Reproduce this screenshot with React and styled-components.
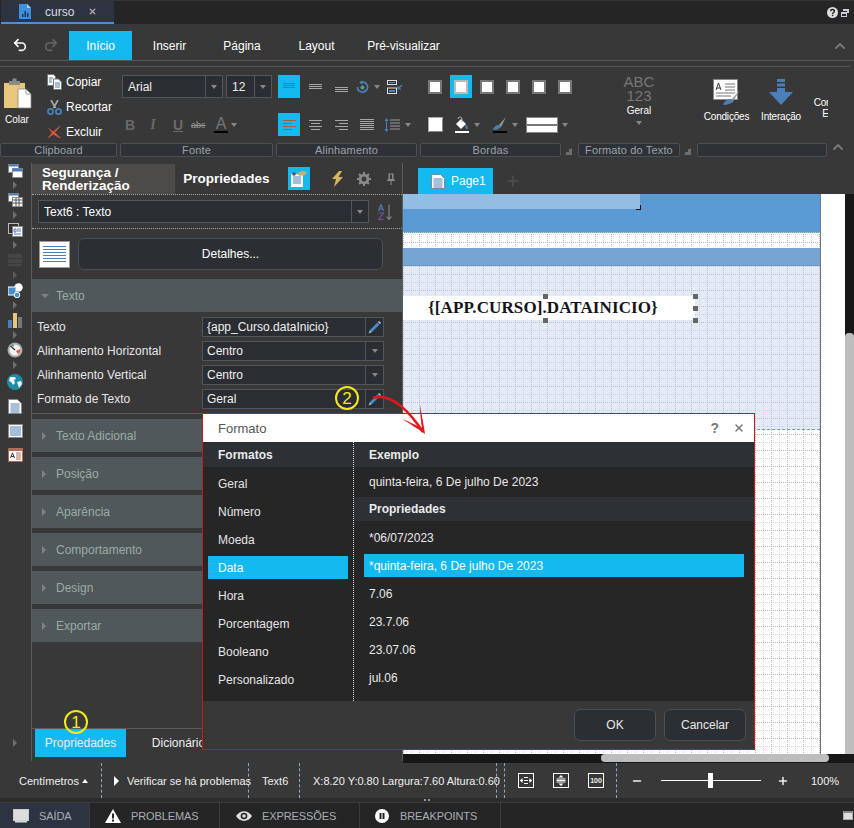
import React from 'react'
import styled, { createGlobalStyle } from 'styled-components'
import { Undo2, Redo2, Plus, Minus, X, ChevronUp } from 'lucide-react'

const ACCENT = '#14b9f0'
const BG = '#383838'
const FIELD = '#2a2e32'
const BLUE = '#4a7fb8'

const gridTile = encodeURIComponent(
  `<svg xmlns="http://www.w3.org/2000/svg" width="16" height="16"><g fill="none" stroke-dasharray="1 1"><path d="M8.5 0V16M0 8.5H16" stroke="#d4d6da"/><path d="M0.5 0V16M0 0.5H16" stroke="#b4b6ba"/></g></svg>`
)

const GlobalStyle = createGlobalStyle`
  html, body {
    margin: 0;
    padding: 0;
    background: ${BG};
  }
  * {
    box-sizing: border-box;
  }
`

const Screen = styled.div`
  position: relative;
  display: flex;
  flex-direction: column;
  width: 854px;
  height: 828px;
  overflow: hidden;
  background: ${BG};
  color: #fff;
  font-family: "Liberation Sans", Arial, sans-serif;
  font-size: 12px;
`

/* title bar */
const TitleBar = styled.div`
  display: flex;
  align-items: flex-start;
  justify-content: space-between;
  height: 24px;
  padding-left: 1px;
  background: #252525;
  border-top: 1px solid #333;
`

const FileTab = styled.div`
  display: flex;
  align-items: center;
  width: 113px;
  height: 23px;
  padding-left: 17px;
  background: #2d3340;
  border-bottom: 2px solid #4a90d9;
  color: #d8dce0;
`

const FileName = styled.span`
  margin-left: 13px;
  margin-right: 14px;
`

const WindowIcons = styled.div`
  display: flex;
  align-items: center;
  gap: 3px;
  height: 23px;
  padding-right: 5px;
`

/* menu */
const MenuRow = styled.div`
  display: flex;
  align-items: flex-end;
  height: 37px;
  padding-left: 12px;
  border-bottom: 1px solid #50565c;
`

const HistoryIcons = styled.div`
  display: flex;
  gap: 15px;
  align-self: center;
  width: 57px;
  margin-top: 6px;
`

const MenuItem = styled.div`
  display: flex;
  align-items: center;
  justify-content: center;
  width: ${p => p.$w}px;
  height: 29px;
  background: ${p => (p.$active ? ACCENT : 'transparent')};
  color: #fff;
  font-size: 12px;
`

const MenuCollapse = styled.div`
  display: flex;
  align-self: center;
  margin-left: auto;
  margin-right: 6px;
  margin-top: 8px;
  color: #777;
`

/* ribbon */
const Ribbon = styled.div`
  position: relative;
  height: 102px;
  padding-top: 5px;
`

const RibbonClip = styled.div`
  width: 828px;
  overflow: hidden;
  border-top: 1px solid #50565c;
`

const RibbonLine = styled.div`
  position: absolute;
  top: 5px;
  left: 828px;
  width: 22px;
  border-top: 1px solid #50565c;
`

const RibbonTools = styled.div`
  display: flex;
  width: 870px;
  height: 76px;
`

const ToolGroup = styled.div`
  display: ${p => (p.$rows ? 'flex' : 'block')};
  flex-direction: column;
  flex: none;
  gap: 15px;
  width: ${p => p.$w}px;
  padding-top: ${p => (p.$rows ? 8 : 0)}px;
  padding-left: ${p => p.$pl || 0}px;
`

const ToolRow = styled.div`
  display: flex;
  align-items: center;
  gap: ${p => (p.$gap === undefined ? 4 : p.$gap)}px;
  height: 23px;
`

const ToolSlot = styled.div`
  display: flex;
  align-items: center;
  justify-content: center;
  flex: none;
  gap: 5px;
  width: ${p => p.$w || 22}px;
  height: 23px;
  background: ${p => (p.$on ? ACCENT : 'transparent')};
`

const Caret = styled.span`
  display: inline-block;
  flex: none;
  width: 0;
  height: 0;
  border-left: 3.5px solid transparent;
  border-right: 3.5px solid transparent;
  border-top: 4px solid #888;
`

const PasteButton = styled.div`
  display: flex;
  flex-direction: column;
  align-items: center;
  width: 34px;
  padding-top: 11px;
  font-size: 10px;
`

const PasteLabel = styled.span`
  margin-top: 5px;
`

const ClipGroup = styled.div`
  display: flex;
  width: 122px;
`

const ClipList = styled.div`
  display: flex;
  flex-direction: column;
  gap: 7px;
  margin-left: 13px;
  padding-top: 6px;
`

const ClipAction = styled.div`
  display: flex;
  align-items: center;
  gap: 4px;
  height: 18px;
`

const ClipIcon = styled.span`
  display: flex;
  justify-content: center;
  width: 15px;
`

const FontSelect = styled.div`
  display: flex;
  align-items: center;
  flex: none;
  width: ${p => p.$w}px;
  height: 23px;
  padding-left: 5px;
  background: ${FIELD};
  border: 1px solid #50565c;
  color: #eee;
  font-size: 12px;
`

const SelectArrow = styled.span`
  display: flex;
  align-items: center;
  justify-content: center;
  flex: none;
  width: ${p => p.$w || 17}px;
  height: 100%;
  margin-left: auto;
  border-left: 1px solid #50565c;
`

const FontStyle = styled.span`
  flex: none;
  width: ${p => p.$w || 18}px;
  color: #6a6a6a;
  font-family: ${p => (p.$serif ? '"Liberation Serif", serif' : '"Liberation Sans", sans-serif')};
  font-size: 14px;
  font-weight: 700;
  font-style: ${p => (p.$italic ? 'italic' : 'normal')};
  text-decoration: ${p => (p.$under ? 'underline' : 'none')};
  text-align: center;
`

const StrikeText = styled.span`
  flex: none;
  width: 20px;
  color: #999;
  font-size: 9px;
  text-decoration: line-through;
`

const ColorLetter = styled.span`
  flex: none;
  width: 14px;
  color: #777;
  font-size: 16px;
  font-weight: 400;
  line-height: 15px;
  text-align: center;
  border-bottom: 2px solid #000;
`

const SquareIcon = styled.div`
  width: 14px;
  height: 14px;
  background: #fff;
  border: 2px solid #777;
  border-color: ${p => p.$edge || '#777'};
`

const ShadowSquare = styled.div`
  width: 13px;
  height: 13px;
  background: #fff;
  box-shadow: 1px 1px 0 #888, 0 0 0 1px #aaa;
`

const BorderPreview = styled.div`
  display: flex;
  flex-direction: column;
  flex: none;
  gap: 2px;
  width: 32px;
  height: 16px;
  padding: 0;
  background: #777;
  border: 1px solid #888;
`

const BorderStripe = styled.div`
  flex: 1;
  background: #fff;
`

const NumberFormat = styled.div`
  display: flex;
  flex-direction: column;
  align-items: center;
  padding-top: 8px;
  padding-right: 2px;
  font-size: 10px;
`

const AbcText = styled.div`
  color: #777;
  font-size: 15px;
  line-height: 14px;
  text-align: center;
`

const FormatName = styled.div`
  margin-top: 2px;
  margin-bottom: 5px;
  font-size: 10px;
  line-height: 11px;
`

const BigTool = styled.div`
  display: flex;
  flex-direction: column;
  align-items: center;
  flex: none;
  width: ${p => p.$w}px;
  padding-top: 12px;
  font-size: 10px;
  line-height: 11px;
  letter-spacing: -0.2px;
  text-align: center;
`

const BigLabel = styled.span`
  margin-top: 6px;
  white-space: nowrap;
`

const GroupLabels = styled.div`
  display: flex;
  width: 828px;
  height: 14px;
  overflow: hidden;
`

const GroupLabel = styled.div`
  display: flex;
  align-items: center;
  justify-content: center;
  flex: none;
  width: ${p => p.$w}px;
  margin-right: ${p => p.$mr || 3}px;
  background: #2e3236;
  border: 1px solid #4b5055;
  border-radius: 2px;
  color: #9ba2a8;
  font-size: 11px;
  letter-spacing: 0.15px;
`

const Expander = styled.span`
  flex: none;
  width: 7px;
  height: 7px;
  margin: 5px 5px 0 -1px;
  margin-right: ${p => p.$mr}px;
  border: 1px solid #6d6d6d;
  border-top-color: transparent;
  border-left-color: transparent;
  box-shadow: inset -2px -2px 0 #6d6d6d;
`

const GroupCollapse = styled.div`
  position: absolute;
  top: 78px;
  right: 8px;
  display: flex;
  color: #777;
`

/* main area */
const Main = styled.div`
  display: flex;
  height: 600px;
`

const SideRail = styled.div`
  display: flex;
  flex-direction: column;
  align-items: center;
  flex: none;
  width: 31px;
  padding-top: 0;
  padding-right: 1px;
`

const RailItem = styled.div`
  display: flex;
  align-items: center;
  justify-content: center;
  flex: none;
  height: ${p => p.$h}px;
`

const RailCaret = styled.span`
  flex: none;
  width: 0;
  height: 0;
  margin: 3px 0 3px;
  border-top: 4px solid transparent;
  border-bottom: 4px solid transparent;
  border-left: 4px solid ${p => p.$c || '#6f6f6f'};
`

const RailFoot = styled.div`
  display: flex;
  margin-top: auto;
  margin-bottom: 13px;
`

const Panel = styled.div`
  display: flex;
  flex-direction: column;
  flex: none;
  width: 372px;
  border-left: 1px solid #5c5c5c;
  border-right: 1px solid #5c5c5c;
  margin-bottom: 2px;
`

const PanelHeader = styled.div`
  display: flex;
  align-items: center;
  height: 32px;
  border-bottom: 1px dotted #aaa;
`

const SecurityTab = styled.div`
  display: flex;
  align-items: center;
  width: 146px;
  height: 30px;
  padding-left: 10px;
  background: #4d4a4a;
  font-size: 13.5px;
  font-weight: 700;
  line-height: 13px;
`

const HeaderTitle = styled.div`
  width: 107px;
  margin-left: 8px;
  font-size: 13.5px;
  font-weight: 700;
`

const HeaderIcon = styled.div`
  display: flex;
  align-items: center;
  justify-content: center;
  flex: none;
  width: 22px;
  height: 23px;
  margin-right: ${p => p.$mr}px;
  background: ${p => (p.$on ? ACCENT : 'transparent')};
`

const ObjectRow = styled.div`
  display: flex;
  align-items: center;
  height: 34px;
  padding-left: 6px;
  padding-top: 0;
  border-bottom: 1px dotted #aaa;
`

const ObjectSelect = styled.div`
  display: flex;
  align-items: center;
  width: 331px;
  height: 23px;
  padding-left: 5px;
  background: ${FIELD};
  border: 1px solid #50565c;
`

const SortIcon = styled.div`
  display: flex;
  margin-left: 9px;
`

const DetailRow = styled.div`
  display: flex;
  align-items: center;
  height: 50px;
  padding-left: 7px;
`

const DetailThumb = styled.div`
  display: flex;
  flex-direction: column;
  justify-content: center;
  gap: 2px;
  width: 31px;
  height: 27px;
  padding: 0 3px;
  background: #fff;
  border: 1px solid #999;
`

const ThumbLine = styled.div`
  height: 1px;
  background: ${BLUE};
`

const DetailButton = styled.div`
  display: flex;
  align-items: center;
  justify-content: center;
  width: 305px;
  height: 32px;
  margin-left: 8px;
  background: #2b2f33;
  border: 1px solid #4b5055;
  border-radius: 6px;
`

const SectionBar = styled.div`
  display: flex;
  align-items: center;
  flex: none;
  height: 33px;
  margin-bottom: 5px;
  padding-left: 9px;
  background: #50585c;
  color: #9aaca2;
`

const SectionArrow = styled.span`
  flex: none;
  width: 0;
  height: 0;
  margin-right: 7px;
  ${p =>
    p.$open
      ? `margin-left: 0; margin-right: 7px; border-left: 4px solid transparent; border-right: 4px solid transparent; border-top: 4px solid #7b8486;`
      : `margin-left: 1px; margin-right: 10px; border-top: 4px solid transparent; border-bottom: 4px solid transparent; border-left: 4px solid #7b8486;`}
`

const PropList = styled.div`
  display: flex;
  flex-direction: column;
  gap: 4px;
  height: 97px;
  padding-bottom: 0;
  margin-bottom: 5px;
  border-bottom: 1px solid #5c5c5c;
`

const PropRow = styled.div`
  display: flex;
  align-items: center;
  height: 20px;
  padding-left: 5px;
  color: #e6e6e6;
`

const PropName = styled.div`
  width: 165px;
`

const PropInput = styled.div`
  display: flex;
  align-items: center;
  width: 164px;
  height: 20px;
  padding-left: ${p => p.$pl || 4}px;
  background: ${FIELD};
  border: 1px solid #50565c;
  color: #f0f0f0;
`

const PropButton = styled.div`
  display: flex;
  align-items: center;
  justify-content: center;
  width: 18px;
  height: 20px;
  background: ${FIELD};
  border: 1px solid #50565c;
  border-left: none;
`

const PanelTabs = styled.div`
  display: flex;
  align-items: flex-start;
  height: 33px;
  margin-top: auto;
  padding-left: 3px;
  border-top: 1px solid #5c5c5c;
`

const PanelTab = styled.div`
  display: flex;
  align-items: center;
  justify-content: center;
  width: ${p => p.$w}px;
  height: 28px;
  background: ${p => (p.$on ? ACCENT : 'transparent')};
  color: #eee;
`

/* canvas */
const CanvasArea = styled.div`
  display: flex;
  flex-direction: column;
  flex: 1;
  min-width: 0;
`

const PageTabs = styled.div`
  display: flex;
  align-items: flex-end;
  flex: none;
  height: 31px;
  padding-left: 15px;
`

const PageTab = styled.div`
  display: flex;
  align-items: center;
  gap: 6px;
  width: 75px;
  height: 26px;
  padding-left: 13px;
  background: ${ACCENT};
`

const AddPage = styled.div`
  display: flex;
  align-self: center;
  margin-left: 12px;
  margin-top: 5px;
  color: #4a4a4a;
`

const CanvasBody = styled.div`
  display: flex;
  flex: none;
  height: 560px;
`

const Sheet = styled.div`
  display: flex;
  flex-direction: column;
  flex: none;
  width: 418px;
  background-color: #fff;
  background-image: url("data:image/svg+xml,${gridTile}");
  border-right: 1px solid #777;
`

const HeaderBand = styled.div`
  flex: none;
  height: 39px;
  background: #5b9bd5;
  border-bottom: 1px dotted #a9d6b8;
`

const HeaderField = styled.div`
  position: relative;
  width: 237px;
  height: 15px;
  background: #93bde3;
`

const CropMark = styled.span`
  position: absolute;
  right: -1px;
  bottom: -1px;
  width: 5px;
  height: 5px;
  border-right: 1px solid #111;
  border-bottom: 1px solid #111;
`

const SheetGap = styled.div`
  flex: none;
  height: 15px;
`

const TitleBand = styled.div`
  flex: none;
  height: 18px;
  background: #77a5d3;
  border-bottom: 1px solid #6a95c4;
`

const DetailBand = styled.div`
  flex: none;
  height: 164px;
  padding-top: 30px;
  background-color: rgba(180, 198, 231, 0.36);
  border-bottom: 1px dashed #6a9ad0;
`

const SelectedText = styled.div`
  position: relative;
  display: flex;
  align-items: center;
  width: 292px;
  height: 24px;
  padding-left: 25px;
  background: #fff;
  color: #14141c;
  font-family: "Liberation Serif", serif;
  font-size: 17px;
  font-weight: 700;
  letter-spacing: 0.1px;
  white-space: nowrap;
`

const Handle = styled.span`
  position: absolute;
  left: ${p => p.$x}px;
  top: ${p => p.$y}px;
  width: 5px;
  height: 5px;
  background: #666;
`

const SideMargin = styled.div`
  flex: none;
  width: 24px;
  background: #fff;
`

const VScroll = styled.div`
  display: flex;
  flex-direction: column;
  flex: 1;
  padding-top: 139px;
  background: #171717;
`

const VThumb = styled.div`
  flex: 1;
  background: #bdbdbd;
  border-radius: 4px 4px 0 0;
`

const HScroll = styled.div`
  flex: none;
  height: 9px;
  padding-left: 198px;
  background: #171717;
`

const HThumb = styled.div`
  width: 228px;
  height: 8px;
  background: #bdbdbd;
  border-radius: 4px;
`

/* status bar */
const StatusBar = styled.div`
  display: flex;
  align-items: center;
  height: 35px;
  font-size: 11px;
  color: #f0f0f0;
`

const StatusCell = styled.div`
  display: flex;
  align-items: center;
  flex: none;
  width: ${p => p.$w}px;
  height: 35px;
  padding-left: ${p => p.$pl || 0}px;
  gap: ${p => p.$gap || 0}px;
  border-right: ${p => (p.$plain ? 'none' : '1px dashed #8fa9c4')};
  white-space: nowrap;
`

const TinyUp = styled.span`
  width: 0;
  height: 0;
  margin-left: 3px;
  border-left: 3.5px solid transparent;
  border-right: 3.5px solid transparent;
  border-bottom: 4px solid #fff;
`

const PlayMark = styled.span`
  width: 0;
  height: 0;
  margin-right: 8px;
  border-top: 5px solid transparent;
  border-bottom: 5px solid transparent;
  border-left: 5px solid #fff;
`

const ZoomSlider = styled.div`
  position: relative;
  flex: none;
  width: 100px;
  height: 1px;
  margin: 0 16px 0 18px;
  background: #fff;
`

const ZoomThumb = styled.span`
  position: absolute;
  left: 47px;
  top: -7px;
  width: 5px;
  height: 15px;
  background: #fff;
`

const ZoomValue = styled.span`
  margin-left: 22px;
`

const GripBand = styled.div`
  display: flex;
  justify-content: center;
  gap: 2px;
  height: 4px;
  background: #2c2c2c;
  padding-top: 1px;
`

const GripDot = styled.span`
  width: 2px;
  height: 2px;
  background: #999;
`

const OutputBar = styled.div`
  display: flex;
  height: 26px;
  background: #252525;
  border-top: 1px solid #3a3a3a;
`

const OutputTab = styled.div`
  display: flex;
  align-items: center;
  flex: none;
  width: ${p => p.$w}px;
  padding-left: ${p => p.$pl}px;
  gap: ${p => p.$gap}px;
  background: ${p => (p.$on ? '#2d3340' : 'transparent')};
  border-right: 1px solid #3a3a3a;
  color: #a9adb2;
  font-size: 11px;
  letter-spacing: -0.1px;
`

const DockIcon = styled.div`
  display: flex;
  align-items: center;
  margin-left: auto;
  padding-right: 1px;
`

const DockBox = styled.div`
  width: 10px;
  height: 9px;
  margin-right: 0;
  background: #ddd;
  border: 1px solid #aaa;
  border-top: 2px solid #888;
`

/* dialog */
const Dialog = styled.div`
  position: absolute;
  left: 202px;
  top: 413px;
  display: flex;
  flex-direction: column;
  width: 553px;
  height: 337px;
  background: ${BG};
  border: 1px solid #c8181e;
`

const DialogHead = styled.div`
  display: flex;
  align-items: center;
  flex: none;
  height: 28px;
  padding-left: 15px;
  padding-right: 9px;
  background: #fff;
  color: #555;
  font-size: 13px;
`

const HeadActions = styled.div`
  display: flex;
  align-items: center;
  gap: 14px;
  margin-left: auto;
  color: #777;
`

const HelpMark = styled.span`
  font-size: 14px;
  font-weight: 700;
`

const DialogBody = styled.div`
  display: flex;
  flex: none;
  height: 259px;
  background: #262626;
`

const FormatColumn = styled.div`
  display: flex;
  flex-direction: column;
  flex: none;
  width: 151px;
  border-right: 1px dotted #ddd;
`

const ValuesColumn = styled.div`
  display: flex;
  flex-direction: column;
  flex: 1;
`

const ColumnHead = styled.div`
  display: flex;
  align-items: center;
  flex: none;
  height: ${p => p.$h}px;
  padding-left: ${p => p.$pl}px;
  background: #2d3135;
  color: #eaeaea;
  font-weight: 700;
`

const FormatList = styled.div`
  display: flex;
  flex-direction: column;
  gap: 5px;
  padding: 5px 5px 0;
`

const FormatRow = styled.div`
  display: flex;
  align-items: center;
  height: 23px;
  padding-left: 10px;
  background: ${p => (p.$on ? ACCENT : 'transparent')};
  color: ${p => (p.$on ? '#fff' : '#e4e4e4')};
`

const SampleRow = styled.div`
  display: flex;
  align-items: center;
  flex: none;
  height: 30px;
  padding-left: 15px;
  color: #e8e8e8;
`

const ValueList = styled.div`
  display: flex;
  flex-direction: column;
  gap: 5px;
  padding: 5px 10px 0;
`

const ValueRow = styled.div`
  display: flex;
  align-items: center;
  height: 23px;
  padding-left: 5px;
  background: ${p => (p.$on ? ACCENT : 'transparent')};
  color: ${p => (p.$on ? '#fff' : '#e8e8e8')};
`

const DialogFoot = styled.div`
  display: flex;
  justify-content: flex-end;
  gap: 8px;
  padding: 8px 8px 0 0;
`

const DialogButton = styled.div`
  display: flex;
  align-items: center;
  justify-content: center;
  width: 82px;
  height: 32px;
  background: #2b2f33;
  border: 1px solid #4b5055;
  border-radius: 6px;
  color: #e8e8e8;
`

/* annotations over the screenshot */
const Marker = styled.div`
  position: absolute;
  left: ${p => p.$x}px;
  top: ${p => p.$y}px;
  display: flex;
  align-items: center;
  justify-content: center;
  width: 24px;
  height: 24px;
  border: 2px solid #f5ea14;
  border-radius: 50%;
  color: #f5ea14;
  font-size: 17px;
  line-height: 1;
`

const ArrowLayer = styled.svg`
  position: absolute;
  left: 365px;
  top: 390px;
`

/* drawings */
const ReportIcon = () => (
  <svg width="14" height="17" viewBox="0 0 14 17">
    <path d="M1 1h8l4 4v11H1z" fill="#3f8fdc" />
    <path d="M9 1v4h4z" fill="#a8cff0" />
    <path d="M4 14v-3h1.5v3zM6.5 14V8H8v6zM9 14v-4h1.5v4z" fill="#16385c" />
  </svg>
)

const HelpIcon = () => (
  <svg width="11" height="11" viewBox="0 0 11 11">
    <circle cx="5.5" cy="5.5" r="5.5" fill="#ddd" />
    <path d="M3.7 4.2c0-2.3 3.7-2.3 3.7 0 0 1.4-1.8 1.3-1.8 2.7" fill="none" stroke="#222" strokeWidth="1.4" />
    <rect x="4.9" y="7.7" width="1.4" height="1.4" fill="#222" />
  </svg>
)

const RestoreIcon = () => (
  <svg width="8" height="8" viewBox="0 0 8 8">
    <path d="M2 0h6v4H6V2H2z" fill="#ccd" />
    <path d="M0 3h6v5H0z" fill="#ccd" />
    <path d="M1 5h4v2H1z" fill="#252525" />
  </svg>
)

const ClipboardIcon = () => (
  <svg width="29" height="31" viewBox="0 0 29 31">
    <path d="M1 5h21v25H1z" fill="#e8c67e" />
    <path d="M6 3h3.5V0.5h4V3H17v4H6z" fill="#8a8a8a" />
    <path d="M15 11h8l5 5v14H15z" fill="#fff" stroke="#888" strokeWidth="0.8" />
    <path d="M23 11v5h5" fill="none" stroke="#888" strokeWidth="0.8" />
  </svg>
)

const CopyIcon = () => (
  <svg width="15" height="16" viewBox="0 0 15 16">
    <path d="M0.5 0.5h6l2 2v9h-8z" fill="#fff" stroke="#777" />
    <path d="M6.5 5h5l3 3v7.5h-8z" fill="#fff" stroke="#777" />
    <path d="M2 4h4M2 6h3M2 8h3M8 9h5M8 11h5M8 13h5" stroke="#4a7fb8" />
  </svg>
)

const ScissorsIcon = () => (
  <svg width="15" height="15" viewBox="0 0 15 15">
    <path d="M4 0l4.5 8M11 0L6.5 8" stroke="#aaa" strokeWidth="1.6" fill="none" />
    <circle cx="3.5" cy="11.5" r="2.6" fill="none" stroke="#4a7fb8" strokeWidth="1.8" />
    <circle cx="11.5" cy="11.5" r="2.6" fill="none" stroke="#4a7fb8" strokeWidth="1.8" />
  </svg>
)

const DeleteIcon = () => (
  <svg width="15" height="14" viewBox="0 0 15 14">
    <path d="M14.5 0.5C10 2.5 8 5 6.5 6.5 4 5.5 2 3 0.5 2 2 4 3.5 6 5 8 3 10 1.5 12 0.5 13.5 3 12 5 10.5 6.5 9.5 9 11 12 13 14.5 13.5 12 11.5 10 9.5 8 7.5 10 5 12 3 14.5 0.5z" fill="#d8583a" />
  </svg>
)

const Lines = ({ width = 14, rows, color = '#999', offset }) => (
  <svg width={width} height="14" viewBox={`0 0 ${width} 14`}>
    {rows.map((r, i) => (
      <rect key={i} x={r[0]} y={r[2] + (offset || 0)} width={r[1]} height="1" fill={r[3] || color} />
    ))}
  </svg>
)

const RotateIcon = () => (
  <svg width="14" height="14" viewBox="0 0 14 14">
    <path d="M4.5 2.2A5.5 5.5 0 1 1 1.5 7" fill="none" stroke="#4a7fb8" strokeWidth="1.8" />
    <path d="M7 0L3.5 2.3 7 4.5z" fill="#4a7fb8" />
    <circle cx="7" cy="7.5" r="2.2" fill="#5a9a80" />
  </svg>
)

const OrientIcon = () => (
  <svg width="16" height="14" viewBox="0 0 16 14">
    <rect x="0.5" y="0.5" width="9" height="4" fill="#333" stroke="#ddd" />
    <rect x="0.5" y="8" width="9" height="5.5" fill="#333" stroke="#ddd" />
    <rect x="2" y="2" width="6" height="1" fill="#4a7fb8" />
    <rect x="2" y="10" width="6" height="2" fill="#4a7fb8" />
    <path d="M15 5L11 9M11 6v3h3" stroke="#4a7fb8" strokeWidth="1.2" fill="none" />
  </svg>
)

const SpacingIcon = () => (
  <svg width="16" height="14" viewBox="0 0 16 14">
    <path d="M2.5 2v10" stroke="#4a7fb8" />
    <path d="M0.5 3l2-3 2 3zM0.5 11l2 3 2-3z" fill="#4a7fb8" />
    <path d="M6 2h10M6 5h10M6 8h10M6 11h10" stroke="#999" />
  </svg>
)

const BucketIcon = () => (
  <svg width="14" height="17" viewBox="0 0 14 17">
    <path d="M1 8l5-5 5 5-5 5z" fill="#fff" />
    <path d="M3 3a2 2 0 0 1 4 0v3" stroke="#aaa" fill="none" />
    <path d="M10 9c2 0 3 1 3 4h-2z" fill="#4a7fb8" />
    <rect x="0" y="15" width="14" height="2" fill="#fff" />
  </svg>
)

const PenIcon = () => (
  <svg width="14" height="17" viewBox="0 0 14 17">
    <path d="M13 1L6 9l2 2z" fill="#999" />
    <path d="M0 14c1-4 4-5 6-5l2 2c-2 2-4 3-8 3z" fill="#4a7fb8" />
    <rect x="0" y="15" width="14" height="2" fill="#000" />
  </svg>
)

const ConditionsIcon = () => (
  <svg width="28" height="26" viewBox="0 0 28 26">
    <rect x="0.5" y="0.5" width="24" height="20" fill="#fff" stroke="#888" />
    <path d="M12 5h10M12 8h10M12 11h10M3 14h19M3 17h15" stroke="#777" />
    <path d="M3 11l2.5-7 2.5 7M4 9h3" fill="none" stroke="#333" />
    <path d="M27 11L17 22l2 2z" fill="#999" />
    <path d="M10 26c1-4 5-6 8-6l2 2c-2 3-6 4-10 4z" fill="#4a7fb8" />
  </svg>
)

const InteractionIcon = () => (
  <svg width="24" height="26" viewBox="0 0 24 26">
    <path d="M8 0h8v3H8zM8 4.500h8v3H8zM8 9h8v4h8L12 26 0 13h8z" fill="#4a7fb8" />
  </svg>
)

const CutoffIcon = () => (
  <svg width="10" height="12" viewBox="0 0 10 12">
    <path d="M0 2h10v10z" fill="#e8c67e" />
  </svg>
)

const RAIL_ICON = { width: 15, height: 14, viewBox: '0 0 15 14' }

const WindowsIcon = () => (
  <svg {...RAIL_ICON}>
    <rect x="0.500" y="0.500" width="10" height="8" fill="#fff" stroke="#888" />
    <rect x="0.500" y="0.500" width="10" height="2" fill="#4a7fb8" />
    <rect x="4.500" y="4.500" width="10" height="9" fill="#fff" stroke="#888" />
    <rect x="4.500" y="4.500" width="10" height="3" fill="#4a7fb8" />
  </svg>
)

const TableWindowIcon = () => (
  <svg {...RAIL_ICON}>
    <rect x="0.500" y="0.500" width="10" height="8" fill="#fff" stroke="#888" />
    <rect x="0.500" y="0.500" width="10" height="2" fill="#4a7fb8" />
    <rect x="4.500" y="4.500" width="10" height="9" fill="#fff" stroke="#888" />
    <path d="M5 7h9M5 10h9M8 5v8M11 5v8" stroke="#555" />
  </svg>
)

const SubreportIcon = () => (
  <svg {...RAIL_ICON}>
    <rect x="0.500" y="0.500" width="10" height="10" fill="#333" stroke="#bbb" />
    <rect x="4.500" y="3.500" width="10" height="10" fill="#fff" stroke="#888" />
    <path d="M6 6h2v3H6zM9 6h4M9 8h4M6 11h7" stroke="#4a7fb8" fill="none" />
  </svg>
)

const BarcodeIcon = () => (
  <svg {...RAIL_ICON}>
    <path d="M1 1v12M3 1v12M5 1v12M7 1v12M9 1v12M11 1v12M13 1v12" stroke="#555" strokeDasharray="4 1" />
  </svg>
)

const ShapesIcon = () => (
  <svg width="15" height="15" viewBox="0 0 15 15">
    <circle cx="10.500" cy="4.500" r="4.200" fill="#fff" />
    <rect x="0" y="4" width="8" height="8" fill="#4a8fd0" stroke="#fff" />
    <circle cx="9" cy="12" r="2.800" fill="#4a8fd0" stroke="#fff" />
  </svg>
)

const ChartIcon = () => (
  <svg width="15" height="15" viewBox="0 0 15 15">
    <rect x="0" y="7" width="4" height="8" fill="#4a7fb8" />
    <rect x="5" y="0" width="4" height="15" fill="#e8c67e" />
    <rect x="10" y="4" width="4" height="11" fill="#777" />
  </svg>
)

const GaugeIcon = () => (
  <svg width="16" height="16" viewBox="0 0 16 16">
    <circle cx="8" cy="8" r="7.500" fill="#aaa" />
    <circle cx="8" cy="8" r="5.500" fill="#f4f4f4" />
    <path d="M3.500 4L8 8" stroke="#333" strokeWidth="1.400" />
    <path d="M13 7a5 5 0 0 1-2 5L9 9z" fill="#d8583a" />
    <path d="M5 3l2 1" stroke="#5a9a80" strokeWidth="1.400" />
  </svg>
)

const GlobeIcon = () => (
  <svg width="16" height="16" viewBox="0 0 16 16">
    <circle cx="8" cy="8" r="8" fill="#1f8ca8" />
    <path d="M3 3h5l1 2-2 1 1 3-2 2-2-3-2-1zM10 8l4-1 1 3-3 4-1-3z" fill="#f2f6f8" />
  </svg>
)

const PageIcon = ({ size = 14 }) => (
  <svg width={size} height={size + 1} viewBox="0 0 14 15">
    <path d="M0.500 0.500h9l4 4v10h-13z" fill="#fff" stroke="#888" />
    <path d="M2.500 5h9M2.500 7h9M2.500 9h9M2.500 11h9M2.500 13h9" stroke="#4a7fb8" />
  </svg>
)

const RowsIcon = () => (
  <svg {...RAIL_ICON}>
    <rect x="0.500" y="0.500" width="14" height="13" fill="#fff" stroke="#888" />
    <path d="M2 3h11M2 5h11M2 7h11M2 9h11M2 11h11" stroke="#4a7fb8" />
  </svg>
)

const LetterCardIcon = () => (
  <svg {...RAIL_ICON}>
    <rect x="0" y="0" width="15" height="14" fill="#b56a58" />
    <rect x="1" y="3" width="13" height="10" fill="#fff" />
    <path d="M2.500 10l2-5 2 5M3.200 8.500h2.600" stroke="#333" fill="none" />
    <path d="M8 5h5M8 7h5M8 9h5M8 11h5" stroke="#b56a58" />
  </svg>
)

const PropsPageIcon = () => (
  <svg width="18" height="17" viewBox="0 0 18 17">
    <path d="M1 4h12v13H1z" fill="#fff" />
    <path d="M3 7h8M3 9h8M3 11h8M3 13h8" stroke="#4a7fb8" />
    <path d="M6 4l6-3 5 1-2 3-5 1z" fill="#c7b073" />
    <circle cx="4" cy="4" r="1.800" fill="#555" />
  </svg>
)

const BoltIcon = () => (
  <svg width="11" height="16" viewBox="0 0 11 16">
    <path d="M7 0L0 8h4L2 16l9-10H6.500L10 0z" fill="#d8b45e" />
  </svg>
)

const GearIcon = () => (
  <svg width="14" height="14" viewBox="0 0 14 14">
    <circle cx="7" cy="7" r="4" fill="none" stroke="#8a8a8a" strokeWidth="2.600" />
    <path d="M7 0v14M0 7h14M2 2l10 10M12 2L2 12" stroke="#8a8a8a" strokeWidth="2" />
    <circle cx="7" cy="7" r="2.500" fill={BG} />
  </svg>
)

const PinIcon = () => (
  <svg width="8" height="12" viewBox="0 0 8 12">
    <path d="M1.500 0.500h5v6H8v1.500H0V6.500h1.500zM3.500 8h1v4h-1z" fill="#8a8a8a" />
    <rect x="3" y="1.500" width="2" height="4.500" fill={BG} />
  </svg>
)

const SortAzIcon = () => (
  <svg width="14" height="16" viewBox="0 0 14 16">
    <path d="M0.500 7L3 0.500 5.500 7M1.200 5h3.600" fill="none" stroke="#4a7fb8" strokeWidth="1.100" />
    <path d="M0.500 9h5L0.500 15.500h5" fill="none" stroke="#7b4fa8" strokeWidth="1.100" />
    <path d="M11 0.500V15M8.500 12.500L11 15.500l2.500-3" fill="none" stroke="#888" strokeWidth="1.100" />
  </svg>
)

const PencilIcon = () => (
  <svg width="13" height="13" viewBox="0 0 13 13">
    <path d="M9.500 1.500l2 2L4 11l-2-2z" fill="#4a8ad0" />
    <path d="M10 1l1-1 2 2-1 1z" fill="#b8d4ee" />
    <path d="M2 9l2 2-3.500 1.500z" fill="#9fb8d0" />
  </svg>
)

const FitWidthIcon = () => (
  <svg width="16" height="15" viewBox="0 0 16 15">
    <rect x="0.500" y="0.500" width="15" height="14" fill="none" stroke="#fff" />
    <path d="M6 4.500h4M6 7.500h4M6 10.500h4M5 7.500H2M11 7.500h3" stroke="#fff" />
    <path d="M4.500 5v5L2 7.500zM11.500 5v5L14 7.500z" fill="#fff" />
  </svg>
)

const FitHeightIcon = () => (
  <svg width="16" height="15" viewBox="0 0 16 15">
    <rect x="0.500" y="0.500" width="15" height="14" fill="none" stroke="#fff" />
    <path d="M3.500 6h9M3.500 7.500h9M3.500 9h9" stroke="#fff" />
    <path d="M5.500 4.500L8 2l2.500 2.500zM5.500 10.500L8 13l2.500-2.500z" fill="#fff" />
  </svg>
)

const MonitorIcon = () => (
  <svg width="16" height="14" viewBox="0 0 16 14">
    <rect x="0.500" y="0.500" width="15" height="11" fill="#ddd" stroke="#ccc" />
    <rect x="2" y="12" width="12" height="1.500" fill="#ddd" />
  </svg>
)

const WarnIcon = () => (
  <svg width="16" height="14" viewBox="0 0 16 14">
    <path d="M8 0l8 14H0z" fill="#fff" />
    <path d="M7 4.500h2v5H7zM7 10.500h2v2H7z" fill="#252525" />
  </svg>
)

const EyeIcon = () => (
  <svg width="16" height="10" viewBox="0 0 16 10">
    <path d="M0 5c4-6.500 12-6.500 16 0-4 6.500-12 6.500-16 0z" fill="#ddd" />
    <circle cx="8" cy="5" r="3.300" fill="#252525" />
    <circle cx="8" cy="5" r="1.800" fill="#ddd" />
  </svg>
)

const PauseIcon = () => (
  <svg width="14" height="14" viewBox="0 0 14 14">
    <circle cx="7" cy="7" r="7" fill="#fff" />
    <path d="M4.500 4h2v6h-2zM7.500 4h2v6h-2z" fill="#252525" />
  </svg>
)

const SelectCaret = () => <SelectArrow><Caret /></SelectArrow>

const SECTIONS = ['Texto Adicional', 'Posição', 'Aparência', 'Comportamento', 'Design', 'Exportar']
const FORMATS = ['Geral', 'Número', 'Moeda', 'Data', 'Hora', 'Porcentagem', 'Booleano', 'Personalizado']
const VALUES = ['*06/07/2023', '*quinta-feira, 6 De julho De 2023', '7.06', '23.7.06', '23.07.06', 'jul.06']

const L = '#a8a8a8'
const ALIGN_TOP = [[1, 12, 3], [1, 12, 5], [1, 12, 7]]
const ALIGN_MID = [[1, 13, 4], [1, 13, 6], [1, 13, 8]]
const ALIGN_LOW = [[1, 13, 7], [1, 13, 9], [1, 13, 11]]
const TEXT_LEFT = [[1, 14, 2], [1, 9, 5], [1, 14, 8], [1, 9, 11]]
const TEXT_CENTER = [[1, 13, 2], [3, 9, 5], [1, 13, 8], [3, 9, 11]]
const TEXT_RIGHT = [[1, 13, 2], [5, 9, 5], [1, 13, 8], [5, 9, 11]]
const TEXT_FULL = [[0, 14, 1], [0, 14, 3], [0, 14, 5], [0, 14, 7], [0, 14, 9], [0, 14, 11]]

const RibbonArea = () => (
  <Ribbon>
    <RibbonLine />
    <RibbonClip>
      <RibbonTools>
        <ClipGroup>
          <PasteButton>
            <ClipboardIcon />
            <PasteLabel>Colar</PasteLabel>
          </PasteButton>
          <ClipList>
            <ClipAction><ClipIcon><CopyIcon /></ClipIcon>Copiar</ClipAction>
            <ClipAction><ClipIcon><ScissorsIcon /></ClipIcon>Recortar</ClipAction>
            <ClipAction><ClipIcon><DeleteIcon /></ClipIcon>Excluir</ClipAction>
          </ClipList>
        </ClipGroup>
        <ToolGroup $rows $w={156}>
          <ToolRow $gap={3}>
            <FontSelect $w={101}>Arial<SelectCaret /></FontSelect>
            <FontSelect $w={46}>12<SelectCaret /></FontSelect>
          </ToolRow>
          <ToolRow $gap={3}>
            <FontStyle $w={16}>B</FontStyle>
            <FontStyle $w={24} $serif $italic>I</FontStyle>
            <FontStyle $w={20} $under>U</FontStyle>
            <StrikeText>abc</StrikeText>
            <ColorLetter>A</ColorLetter>
            <Caret />
          </ToolRow>
        </ToolGroup>
        <ToolGroup $rows $w={144}>
          <ToolRow>
            <ToolSlot $on><Lines rows={ALIGN_TOP} color="#b4553f" /></ToolSlot>
            <ToolSlot><Lines rows={ALIGN_MID} color={L} /></ToolSlot>
            <ToolSlot><Lines rows={ALIGN_LOW} color={L} /></ToolSlot>
            <ToolSlot $w={24}><RotateIcon /><Caret /></ToolSlot>
            <ToolSlot $w={22}><OrientIcon /></ToolSlot>
          </ToolRow>
          <ToolRow>
            <ToolSlot $on><Lines rows={TEXT_LEFT} color="#b4553f" /></ToolSlot>
            <ToolSlot><Lines rows={TEXT_CENTER} color={L} /></ToolSlot>
            <ToolSlot><Lines rows={TEXT_RIGHT} color={L} /></ToolSlot>
            <ToolSlot><Lines rows={TEXT_FULL} color={L} /></ToolSlot>
            <ToolSlot $w={30}><SpacingIcon /><Caret /></ToolSlot>
          </ToolRow>
        </ToolGroup>
        <ToolGroup $rows $w={158} $pl={2}>
          <ToolRow>
            <ToolSlot><SquareIcon /></ToolSlot>
            <ToolSlot $on><SquareIcon $edge="#bbb" /></ToolSlot>
            <ToolSlot><SquareIcon /></ToolSlot>
            <ToolSlot><SquareIcon /></ToolSlot>
            <ToolSlot><SquareIcon /></ToolSlot>
            <ToolSlot><SquareIcon /></ToolSlot>
          </ToolRow>
          <ToolRow>
            <ToolSlot><ShadowSquare /></ToolSlot>
            <ToolSlot $w={34}><BucketIcon /><Caret /></ToolSlot>
            <ToolSlot $w={34}><PenIcon /><Caret /></ToolSlot>
            <BorderPreview><BorderStripe /><BorderStripe /></BorderPreview>
            <Caret />
          </ToolRow>
        </ToolGroup>
        <ToolGroup $w={120}>
          <NumberFormat>
            <AbcText>ABC<br />123</AbcText>
            <FormatName>Geral</FormatName>
            <Caret />
          </NumberFormat>
        </ToolGroup>
        <BigTool $w={53}><ConditionsIcon /><BigLabel>Condições</BigLabel></BigTool>
        <BigTool $w={56}><InteractionIcon /><BigLabel>Interação</BigLabel></BigTool>
        <BigTool $w={50}><CutoffIcon /><BigLabel>Condição<br />Estilo</BigLabel></BigTool>
      </RibbonTools>
    </RibbonClip>
    <GroupLabels>
      <GroupLabel $w={117}>Clipboard</GroupLabel>
      <GroupLabel $w={153}>Fonte</GroupLabel>
      <GroupLabel $w={141}>Alinhamento</GroupLabel>
      <GroupLabel $w={141} $mr={5}>Bordas</GroupLabel>
      <Expander $mr={6} />
      <GroupLabel $w={102} $mr={5}>Formato do Texto</GroupLabel>
      <Expander $mr={6} />
      <GroupLabel $w={130} />
    </GroupLabels>
    <GroupCollapse><ChevronUp size={16} strokeWidth={3} /></GroupCollapse>
  </Ribbon>
)

const SideBar = () => (
  <SideRail>
    <RailItem $h={15}><WindowsIcon /></RailItem>
    <RailCaret />
    <RailItem $h={16}><TableWindowIcon /></RailItem>
    <RailCaret />
    <RailItem $h={16}><SubreportIcon /></RailItem>
    <RailCaret />
    <RailItem $h={16}><BarcodeIcon /></RailItem>
    <RailCaret $c="#5a5a5a" />
    <RailItem $h={16}><ShapesIcon /></RailItem>
    <RailCaret />
    <RailItem $h={16}><ChartIcon /></RailItem>
    <RailCaret />
    <RailItem $h={16}><GaugeIcon /></RailItem>
    <RailCaret />
    <RailItem $h={20}><GlobeIcon /></RailItem>
    <RailItem $h={28}><PageIcon /></RailItem>
    <RailItem $h={22}><RowsIcon /></RailItem>
    <RailItem $h={26}><LetterCardIcon /></RailItem>
    <RailFoot><RailCaret /></RailFoot>
  </SideRail>
)

const PropertiesPanel = () => (
  <Panel>
    <PanelHeader>
      <SecurityTab>Segurança /<br />Renderização</SecurityTab>
      <HeaderTitle>Propriedades</HeaderTitle>
      <HeaderIcon $on $mr={16}><PropsPageIcon /></HeaderIcon>
      <HeaderIcon $mr={5}><BoltIcon /></HeaderIcon>
      <HeaderIcon $mr={5}><GearIcon /></HeaderIcon>
      <HeaderIcon $mr={0}><PinIcon /></HeaderIcon>
    </PanelHeader>
    <ObjectRow>
      <ObjectSelect>Text6 : Texto<SelectCaret /></ObjectSelect>
      <SortIcon><SortAzIcon /></SortIcon>
    </ObjectRow>
    <DetailRow>
      <DetailThumb>
        <ThumbLine /><ThumbLine /><ThumbLine /><ThumbLine /><ThumbLine /><ThumbLine />
      </DetailThumb>
      <DetailButton>Detalhes...</DetailButton>
    </DetailRow>
    <SectionBar><SectionArrow $open />Texto</SectionBar>
    <PropList>
      <PropRow>
        <PropName>Texto</PropName>
        <PropInput>{'{app_Curso.dataInicio}'}</PropInput>
        <PropButton><PencilIcon /></PropButton>
      </PropRow>
      <PropRow>
        <PropName>Alinhamento Horizontal</PropName>
        <PropInput>Centro</PropInput>
        <PropButton><Caret /></PropButton>
      </PropRow>
      <PropRow>
        <PropName>Alinhamento Vertical</PropName>
        <PropInput>Centro</PropInput>
        <PropButton><Caret /></PropButton>
      </PropRow>
      <PropRow>
        <PropName>Formato de Texto</PropName>
        <PropInput>Geral</PropInput>
        <PropButton><PencilIcon /></PropButton>
      </PropRow>
    </PropList>
    {SECTIONS.map(name => (
      <SectionBar key={name}><SectionArrow />{name}</SectionBar>
    ))}
    <PanelTabs>
      <PanelTab $on $w={91}>Propriedades</PanelTab>
      <PanelTab $w={105}>Dicionário</PanelTab>
    </PanelTabs>
  </Panel>
)

const Canvas = () => (
  <CanvasArea>
    <PageTabs>
      <PageTab><PageIcon />Page1</PageTab>
      <AddPage><Plus size={16} strokeWidth={3} /></AddPage>
    </PageTabs>
    <CanvasBody>
      <Sheet>
        <HeaderBand>
          <HeaderField><CropMark /></HeaderField>
        </HeaderBand>
        <SheetGap />
        <TitleBand />
        <DetailBand>
          <SelectedText>
            {'{[APP.CURSO].DATAINICIO}'}
            <Handle $x={140} $y={-2} />
            <Handle $x={140} $y={22} />
            <Handle $x={290} $y={-2} />
            <Handle $x={290} $y={10} />
            <Handle $x={290} $y={22} />
          </SelectedText>
        </DetailBand>
      </Sheet>
      <SideMargin />
      <VScroll><VThumb /></VScroll>
    </CanvasBody>
    <HScroll><HThumb /></HScroll>
  </CanvasArea>
)

const Status = () => (
  <StatusBar>
    <StatusCell $w={102} $pl={19}>Centímetros<TinyUp /></StatusCell>
    <StatusCell $w={147} $pl={12}><PlayMark />Verificar se há problemas</StatusCell>
    <StatusCell $w={51} $pl={13}>Text6</StatusCell>
    <StatusCell $w={197} $pl={13}>X:8.20 Y:0.80 Largura:7.60 Altura:0.60</StatusCell>
    <StatusCell $w={8} />
    <StatusCell $w={112} $pl={13} $gap={19}>
      <FitWidthIcon /><FitHeightIcon /><MonitorLabel />
    </StatusCell>
    <StatusCell $w={237} $pl={14} $plain>
      <Minus size={12} strokeWidth={3} />
      <ZoomSlider><ZoomThumb /></ZoomSlider>
      <Plus size={12} strokeWidth={3} />
      <ZoomValue>100%</ZoomValue>
    </StatusCell>
  </StatusBar>
)

const HundredBox = styled.span`
  display: flex;
  align-items: center;
  justify-content: center;
  flex: none;
  width: 16px;
  height: 15px;
  border: 1px solid #fff;
  font-size: 7px;
  font-weight: 700;
`

const MonitorLabel = () => <HundredBox>100</HundredBox>

const FormatDialog = () => (
  <Dialog>
    <DialogHead>
      Formato
      <HeadActions>
        <HelpMark>?</HelpMark>
        <X size={12} strokeWidth={3} />
      </HeadActions>
    </DialogHead>
    <DialogBody>
      <FormatColumn>
        <ColumnHead $h={25} $pl={15}>Formatos</ColumnHead>
        <FormatList>
          {FORMATS.map(f => (
            <FormatRow key={f} $on={f === 'Data'}>{f}</FormatRow>
          ))}
        </FormatList>
      </FormatColumn>
      <ValuesColumn>
        <ColumnHead $h={25} $pl={15}>Exemplo</ColumnHead>
        <SampleRow>quinta-feira, 6 De julho De 2023</SampleRow>
        <ColumnHead $h={24} $pl={15}>Propriedades</ColumnHead>
        <ValueList>
          {VALUES.map((v, i) => (
            <ValueRow key={v} $on={i === 1}>{v}</ValueRow>
          ))}
        </ValueList>
      </ValuesColumn>
    </DialogBody>
    <DialogFoot>
      <DialogButton>OK</DialogButton>
      <DialogButton>Cancelar</DialogButton>
    </DialogFoot>
  </Dialog>
)

const App = () => (
  <Screen>
    <GlobalStyle />
    <TitleBar>
      <FileTab>
        <ReportIcon />
        <FileName>curso</FileName>
        <X size={9} strokeWidth={3.5} color="#aaa" />
      </FileTab>
      <WindowIcons><HelpIcon /><RestoreIcon /></WindowIcons>
    </TitleBar>
    <MenuRow>
      <HistoryIcons>
        <Undo2 size={16} strokeWidth={2.4} color="#fff" />
        <Redo2 size={16} strokeWidth={2.4} color="#666" />
      </HistoryIcons>
      <MenuItem $active $w={63}>Início</MenuItem>
      <MenuItem $w={75}>Inserir</MenuItem>
      <MenuItem $w={70}>Página</MenuItem>
      <MenuItem $w={79}>Layout</MenuItem>
      <MenuItem $w={95}>Pré-visualizar</MenuItem>
      <MenuCollapse><ChevronUp size={16} strokeWidth={3} /></MenuCollapse>
    </MenuRow>
    <RibbonArea />
    <Main>
      <SideBar />
      <PropertiesPanel />
      <Canvas />
    </Main>
    <Status />
    <GripBand><GripDot /><GripDot /></GripBand>
    <OutputBar>
      <OutputTab $on $w={90} $pl={13} $gap={10}><MonitorIcon />SAÍDA</OutputTab>
      <OutputTab $w={130} $pl={15} $gap={10}><WarnIcon />PROBLEMAS</OutputTab>
      <OutputTab $w={140} $pl={16} $gap={10}><EyeIcon />EXPRESSÕES</OutputTab>
      <OutputTab $w={141} $pl={15} $gap={11}><PauseIcon />BREAKPOINTS</OutputTab>
      <DockIcon><DockBox /></DockIcon>
    </OutputBar>
    <FormatDialog />
    <Marker $x={335} $y={386}>2</Marker>
    <Marker $x={64} $y={710}>1</Marker>
    <ArrowLayer width="70" height="60" viewBox="0 0 70 60">
      <path d="M8 8C25 3 42 18 58 42" fill="none" stroke="#e8141c" strokeWidth="2.400" />
      <path d="M37 29C45 34 52 38 60 44 58 30 56 22 55 14 55 24 56 32 57 38 50 35 43 31 37 29z" fill="#e8141c" />
    </ArrowLayer>
  </Screen>
)

export default App
